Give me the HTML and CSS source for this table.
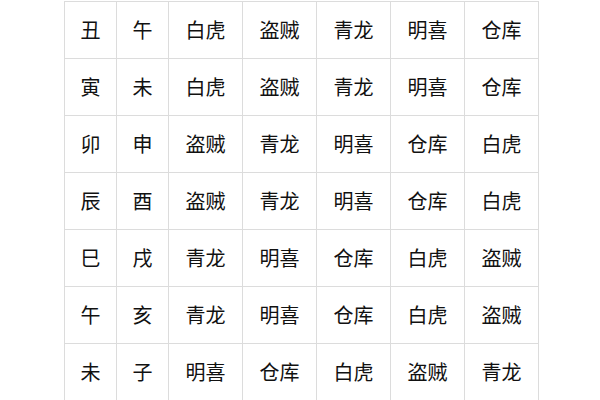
FILE: index.html
```html
<!DOCTYPE html>
<html lang="zh">
<head>
<meta charset="utf-8">
<link rel="stylesheet" href="styles.css">
</head>
<body>
<table class="grid">
<colgroup>
<col class="c-narrow"><col class="c-narrow"><col class="c-wide"><col class="c-wide"><col class="c-wide"><col class="c-wide"><col class="c-wide">
</colgroup>
<tbody>
<tr><td>丑</td><td>午</td><td>白虎</td><td>盗贼</td><td>青龙</td><td>明喜</td><td>仓库</td></tr>
<tr><td>寅</td><td>未</td><td>白虎</td><td>盗贼</td><td>青龙</td><td>明喜</td><td>仓库</td></tr>
<tr><td>卯</td><td>申</td><td>盗贼</td><td>青龙</td><td>明喜</td><td>仓库</td><td>白虎</td></tr>
<tr><td>辰</td><td>酉</td><td>盗贼</td><td>青龙</td><td>明喜</td><td>仓库</td><td>白虎</td></tr>
<tr><td>巳</td><td>戌</td><td>青龙</td><td>明喜</td><td>仓库</td><td>白虎</td><td>盗贼</td></tr>
<tr><td>午</td><td>亥</td><td>青龙</td><td>明喜</td><td>仓库</td><td>白虎</td><td>盗贼</td></tr>
<tr><td>未</td><td>子</td><td>明喜</td><td>仓库</td><td>白虎</td><td>盗贼</td><td>青龙</td></tr>
</tbody>
</table>
</body>
</html>
```
FILE: styles.css
```css
html, body {
  margin: 0;
  padding: 0;
  background: #ffffff;
}
body {
  padding: 1px 0 0 64px;
  font-family: "Noto Sans CJK SC", "Noto Sans", sans-serif;
  color: #111111;
}
.grid {
  border-collapse: collapse;
  table-layout: fixed;
  width: 475px;
}
.c-narrow { width: 52px; }
.c-wide { width: 74px; }
.grid td {
  border: 1px solid #dcdcdc;
  height: 56px;
  padding: 0;
  text-align: center;
  vertical-align: middle;
  font-size: 20px;
  line-height: 1;
}
```
